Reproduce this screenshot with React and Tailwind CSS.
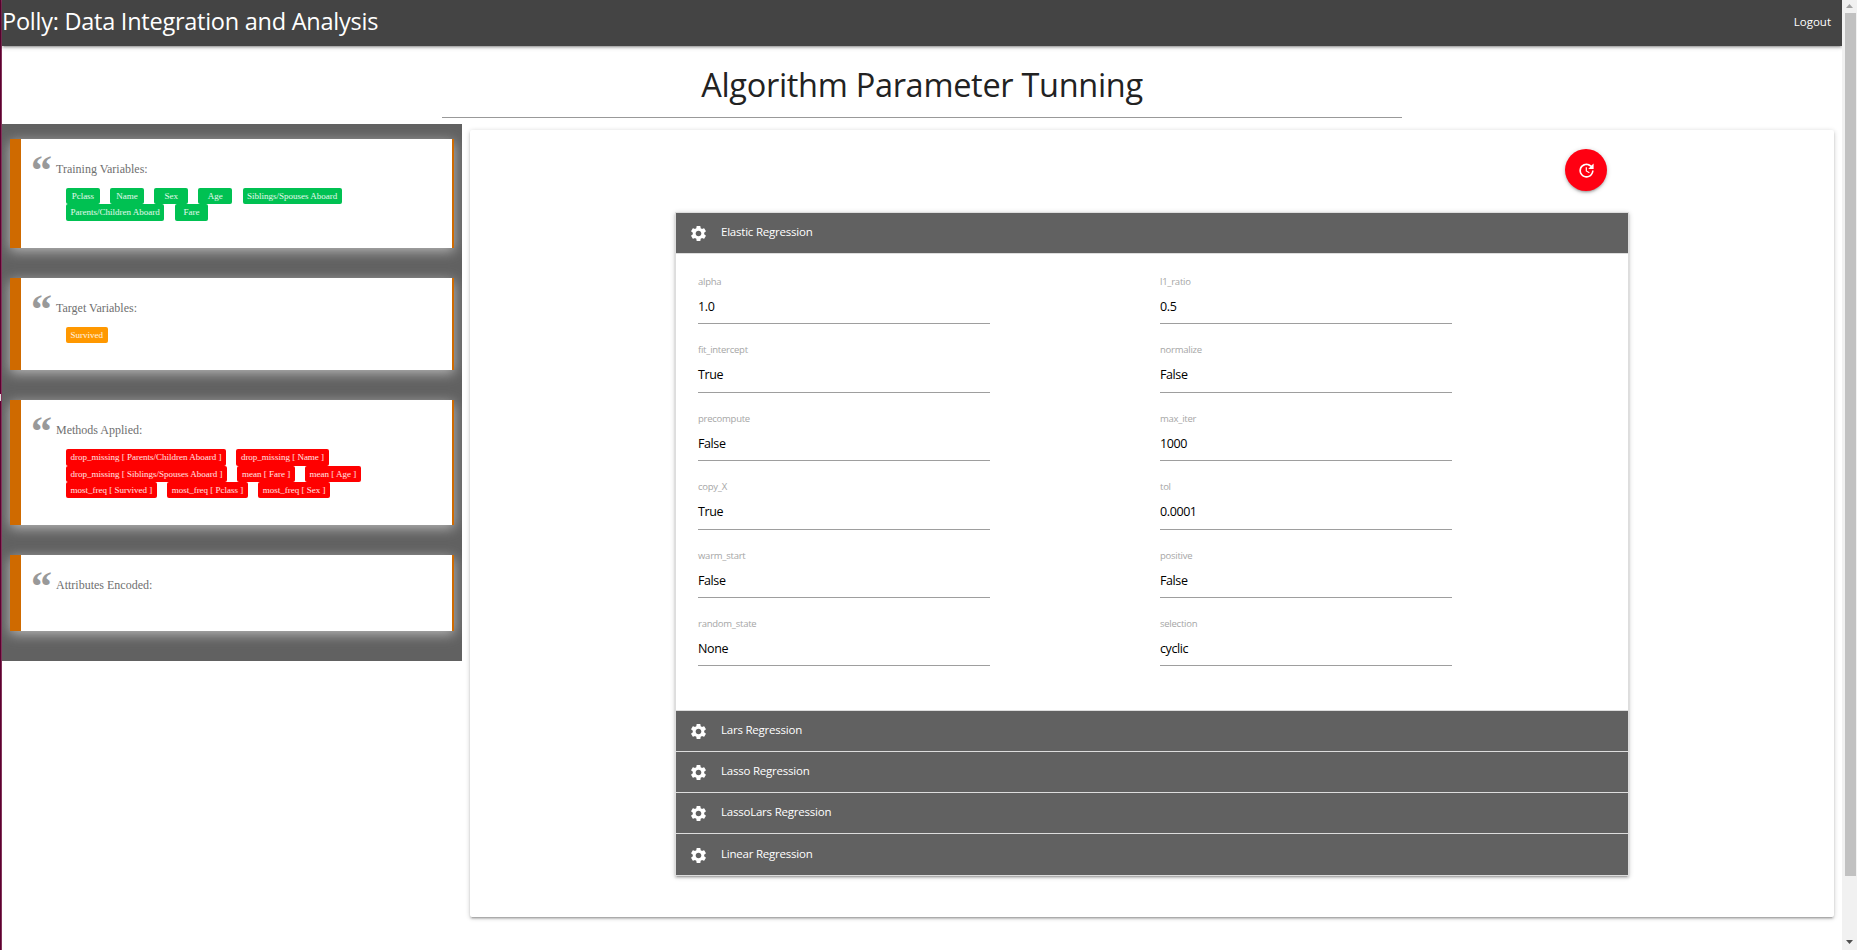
import { MdSettings, MdUpdate } from 'react-icons/md';

const SHADOW =
  'shadow-[0_2px_2px_0_rgba(0,0,0,0.14),0_3px_1px_-2px_rgba(0,0,0,0.12),0_1px_5px_0_rgba(0,0,0,0.2)]';

const cards = [
  {
    title: 'Training Variables:',
    color: 'bg-[#00c152]',
    chips: ['Pclass', 'Name', 'Sex', 'Age', 'Siblings/Spouses Aboard', 'Parents/Children Aboard', 'Fare'],
  },
  { title: 'Target Variables:', color: 'bg-[#ff9800]', chips: ['Survived'] },
  {
    title: 'Methods Applied:',
    color: 'bg-[#ff0000]',
    chips: [
      'drop_missing [ Parents/Children Aboard ]',
      'drop_missing [ Name ]',
      'drop_missing [ Siblings/Spouses Aboard ]',
      'mean [ Fare ]',
      'mean [ Age ]',
      'most_freq [ Survived ]',
      'most_freq [ Pclass ]',
      'most_freq [ Sex ]',
    ],
  },
  { title: 'Attributes Encoded:', color: '', chips: [] },
];

const fields = [
  ['alpha', '1.0'],
  ['l1_ratio', '0.5'],
  ['fit_intercept', 'True'],
  ['normalize', 'False'],
  ['precompute', 'False'],
  ['max_iter', '1000'],
  ['copy_X', 'True'],
  ['tol', '0.0001'],
  ['warm_start', 'False'],
  ['positive', 'False'],
  ['random_state', 'None'],
  ['selection', 'cyclic'],
];

function VariableCard({ title, color, chips }) {
  return (
    <section className="border-l-[11px] border-r-2 border-[#cf6a00] bg-white pb-[27px] pl-[10px] pr-5 font-['Liberation_Serif',serif] shadow-[0_3px_12px_0_#b9b9b9]">
      <div className="flex h-[37px] items-start">
        <span className="mt-[10px] w-[25px] text-[42px] font-bold leading-[42px] text-[#999]">“</span>
        <h2 className="mt-[23px] text-[12px] leading-[14px] text-[#6f6f6f]">{title}</h2>
      </div>
      <div className="flex flex-wrap gap-x-[10.4px] pl-[35px] pt-3">
        {chips.map((chip) => (
          <span
            key={chip}
            className={`min-w-[33.75px] rounded-xs px-[4.5px] text-center text-[9px] leading-[16.4px] text-white/90 ${color}`}
          >
            {chip}
          </span>
        ))}
      </div>
    </section>
  );
}

function RegressionHeader({ name, last }) {
  return (
    <div
      className={`flex items-center border-b border-[#ddd] bg-[#616161] pl-[13px] text-white ${last ? 'h-[42px] pt-px' : 'h-[41px]'}`}
    >
      <MdSettings size={19} />
      <span className="-mt-[3px] ml-[13px] text-[11.5px] tracking-[-0.22px]">{name}</span>
    </div>
  );
}

function Field({ label, value }) {
  return (
    <div className="flex h-[68.4px] w-[291.5px] flex-col border-b border-[#9e9e9e] pt-5">
      <label className="h-3 text-[9.5px] leading-3 tracking-[-0.25px] text-[#a6a6a6]">{label}</label>
      <span className="mt-[11px] text-[12.5px] leading-4 tracking-[-0.4px] text-black">{value}</span>
    </div>
  );
}

function ScrollBar() {
  return (
    <div className="flex w-[15px] flex-col items-center bg-[#f1f1f1]">
      <svg width="15" height="13" viewBox="0 0 15 13">
        <path d="M4 8h7L7.5 4z" fill="#a3a3a3" />
      </svg>
      <div className="ml-px h-[863px] w-[11px] bg-[#c1c1c1]" />
      <svg className="mt-auto" width="15" height="15" viewBox="0 0 15 15">
        <path d="M4 5h7L7.5 9z" fill="#505050" />
      </svg>
    </div>
  );
}

export default function App() {
  return (
    <div className="flex h-[950px] w-[1857px] overflow-hidden bg-white font-['Open_Sans',sans-serif]">
      <div className="w-0.5 border-r border-[#82345a] bg-[#5e0030] pt-[394px]">
        <div className="h-[7px] bg-[#ddd]" />
      </div>

      <div className="flex min-w-0 flex-1 flex-col">
        <header className={`flex h-[46px] shrink-0 items-center justify-between bg-[#444] pr-[11px] text-white ${SHADOW}`}>
          <span className="-mt-[3px] text-[23.5px] tracking-[-0.25px]">Polly: Data Integration and Analysis</span>
          <a className="-mt-[3px] text-[11.5px]">Logout</a>
        </header>

        <h1 className="mt-[17px] text-center text-[32.5px] leading-[44px] tracking-[-0.3px] text-[#222]">
          Algorithm Parameter Tunning
        </h1>
        <div className="mx-auto mt-[10px] h-px w-[960px] shrink-0 bg-[#999]" />

        <div className="mt-[6px] flex items-start gap-2">
          <aside className="flex w-[460px] flex-col gap-[30px] overflow-hidden bg-[#616161] pb-[30px] pl-2 pr-2 pt-[15px]">
            {cards.map((card) => (
              <VariableCard key={card.title} {...card} />
            ))}
          </aside>

          <main className={`mt-[6px] h-[787px] w-[1364px] rounded-xs bg-white pl-[205px] pt-[19px] ${SHADOW}`}>
            <div className="flex w-[932px] justify-end">
              <button className={`flex size-[42px] items-center justify-center rounded-full bg-[#ff0012] text-white ${SHADOW}`}>
                <MdUpdate size={19} />
              </button>
            </div>

            <div className={`mt-[21px] w-[954px] border border-b-0 border-[#ddd] bg-white ${SHADOW}`}>
              <RegressionHeader name="Elastic Regression" />
              <div className="grid h-[457px] grid-cols-[462px_1fr] content-start border-b border-[#ddd] pl-[22px] pt-0.5">
                {fields.map(([label, value]) => (
                  <Field key={label} label={label} value={value} />
                ))}
              </div>
              <RegressionHeader name="Lars Regression" />
              <RegressionHeader name="Lasso Regression" />
              <RegressionHeader name="LassoLars Regression" />
              <RegressionHeader name="Linear Regression" last />
            </div>
          </main>
        </div>
      </div>

      <ScrollBar />
    </div>
  );
}
